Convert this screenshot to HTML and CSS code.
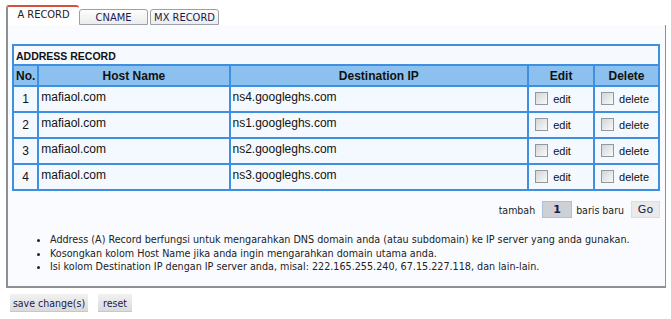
FILE: index.html
```html
<!DOCTYPE html>
<html lang="id">
<head>
  <meta charset="UTF-8" />
  <title>DNS Record</title>
  <link rel="stylesheet" href="styles.css">
</head>
<body>
  <div class="tabs">
    <a href="#" class="tab active">A RECORD</a>
    <a href="#" class="tab">CNAME</a>
    <a href="#" class="tab">MX RECORD</a>
  </div>

  <div class="panel">
    <table class="records">
      <colgroup>
        <col class="c-no"><col class="c-host"><col class="c-dest"><col class="c-edit"><col class="c-del">
      </colgroup>
      <tr><th class="title" colspan="5">ADDRESS RECORD</th></tr>
      <tr class="head">
        <th>No.</th><th>Host Name</th><th>Destination IP</th><th>Edit</th><th>Delete</th>
      </tr>
      <tr>
        <td class="no">1</td><td>mafiaol.com</td><td>ns4.googleghs.com</td>
        <td class="chk"><label><input type="checkbox"> edit</label></td>
        <td class="chk"><label><input type="checkbox"> delete</label></td>
      </tr>
      <tr>
        <td class="no">2</td><td>mafiaol.com</td><td>ns1.googleghs.com</td>
        <td class="chk"><label><input type="checkbox"> edit</label></td>
        <td class="chk"><label><input type="checkbox"> delete</label></td>
      </tr>
      <tr>
        <td class="no">3</td><td>mafiaol.com</td><td>ns2.googleghs.com</td>
        <td class="chk"><label><input type="checkbox"> edit</label></td>
        <td class="chk"><label><input type="checkbox"> delete</label></td>
      </tr>
      <tr>
        <td class="no">4</td><td>mafiaol.com</td><td>ns3.googleghs.com</td>
        <td class="chk"><label><input type="checkbox"> edit</label></td>
        <td class="chk"><label><input type="checkbox"> delete</label></td>
      </tr>
    </table>

    <div class="add-row">
      tambah <input type="text" class="count" value="1"> baris baru <button class="go">Go</button>
    </div>

    <ul class="notes">
      <li>Address (A) Record berfungsi untuk mengarahkan DNS domain anda (atau subdomain) ke IP server yang anda gunakan.</li>
      <li>Kosongkan kolom Host Name jika anda ingin mengarahkan domain utama anda.</li>
      <li>Isi kolom Destination IP dengan IP server anda, misal: 222.165.255.240, 67.15.227.118, dan lain-lain.</li>
    </ul>
  </div>

  <div class="actions">
    <button class="btn save">save change(s)</button>
    <button class="btn reset">reset</button>
  </div>
</body>
</html>
```

FILE: styles.css
```css
* {
  box-sizing: border-box;
}
body {
  margin: 0;
  padding: 5px 0 0 6px;
  width: 666px;
  background: #fff;
  font-family: 'DejaVu Sans Condensed', 'DejaVu Sans', sans-serif;
  font-size: 10.5px;
  color: #222;
}
.tabs {
  display: flex;
  align-items: flex-end;
  height: 20px;
}
.tab {
  display: block;
  width: 69px;
  height: 16px;
  line-height: 15px;
  margin-left: 2px;
  text-align: center;
  text-decoration: none;
  color: #1a1a50;
  font-size: 11px;
  background: linear-gradient(#fdfdfd, #ececec);
  border: 1px solid #9aa0a6;
  border-radius: 3px 3px 0 0;
}
.tab.active {
  margin-left: 0;
  width: 73px;
  height: 20px;
  line-height: 16px;
  color: #222;
  background: #fff;
  border: none;
  border-left: 2px solid #8c9292;
  border-top: 2px solid #d6503c;
}
.tab.active + .tab {
  margin-left: 0;
}
.panel {
  height: 263px;
  background: #fafbff;
  border-left: 2px solid #8c9292;
  border-right: 1px solid #8c9292;
  border-bottom: 2px solid #8c9292;
  padding: 19px 5px 0 4px;
}
.records {
  width: 648px;
  border-collapse: collapse;
  font-family: 'Liberation Sans', Arial, sans-serif;
  font-size: 12px;
  color: #111;
}
.c-no { width: 25px; }
.c-host { width: 192px; }
.c-dest { width: 300px; }
.c-edit { width: 66px; }
.c-del { width: 65px; }
.records th,
.records td {
  border: 2px solid #3e8fe0;
  padding: 0 2px;
  vertical-align: top;
}
.records td {
  background: #f4f9ff;
  height: 26px;
  padding-top: 3px;
}
.records .title {
  text-align: left;
  background: #f6faff;
  height: 20px;
  padding: 4px 2px 0;
  font-size: 10.5px;
}
.head th {
  background: #8cc1ef;
  height: 21px;
  padding-top: 3px;
  text-align: center;
}
.records .no {
  text-align: center;
  padding-top: 5px;
}
.records .chk {
  padding: 5px 0 0 6px;
  font-size: 11px;
}
.chk label {
  display: flex;
  align-items: flex-end;
  gap: 5px;
}
.chk input {
  appearance: none;
  width: 13px;
  height: 13px;
  margin: 0;
  border: 1px solid #8f9aa0;
  background: linear-gradient(135deg, #d2d4d6, #fafafa);
}
.add-row {
  display: flex;
  justify-content: flex-end;
  align-items: center;
  gap: 3px;
  margin-top: 10px;
  width: 648px;
}
.count {
  width: 30px;
  height: 17px;
  margin: 0 1px 0 4px;
  border: 1px solid #a8c0d8;
  background: #cdd0d4;
  text-align: center;
  font-weight: bold;
  font-family: 'DejaVu Sans', sans-serif;
  font-size: 11px;
  color: #1a1a50;
}
.go {
  width: 29px;
  height: 17px;
  margin-left: 4px;
  padding: 0;
  border: 1px solid #ddd;
  background: #eaeaea;
  font-family: 'DejaVu Sans', sans-serif;
  font-size: 11px;
  color: #1a1a50;
}
.notes {
  margin: 15px 0 0;
  padding-left: 38px;
  line-height: 13.5px;
  font-size: 10.7px;
}
.actions {
  display: flex;
  gap: 10px;
  margin: 6px 0 0 4px;
}
.btn {
  height: 18px;
  padding: 0;
  border: none;
  border-bottom: 1px solid #c8c8c8;
  background: linear-gradient(#f2f2f2, #dadada);
  font-family: 'DejaVu Sans Condensed', 'DejaVu Sans', sans-serif;
  font-size: 10.5px;
  color: #1a1a50;
}
.save { width: 78px; }
.reset { width: 34px; }
```
